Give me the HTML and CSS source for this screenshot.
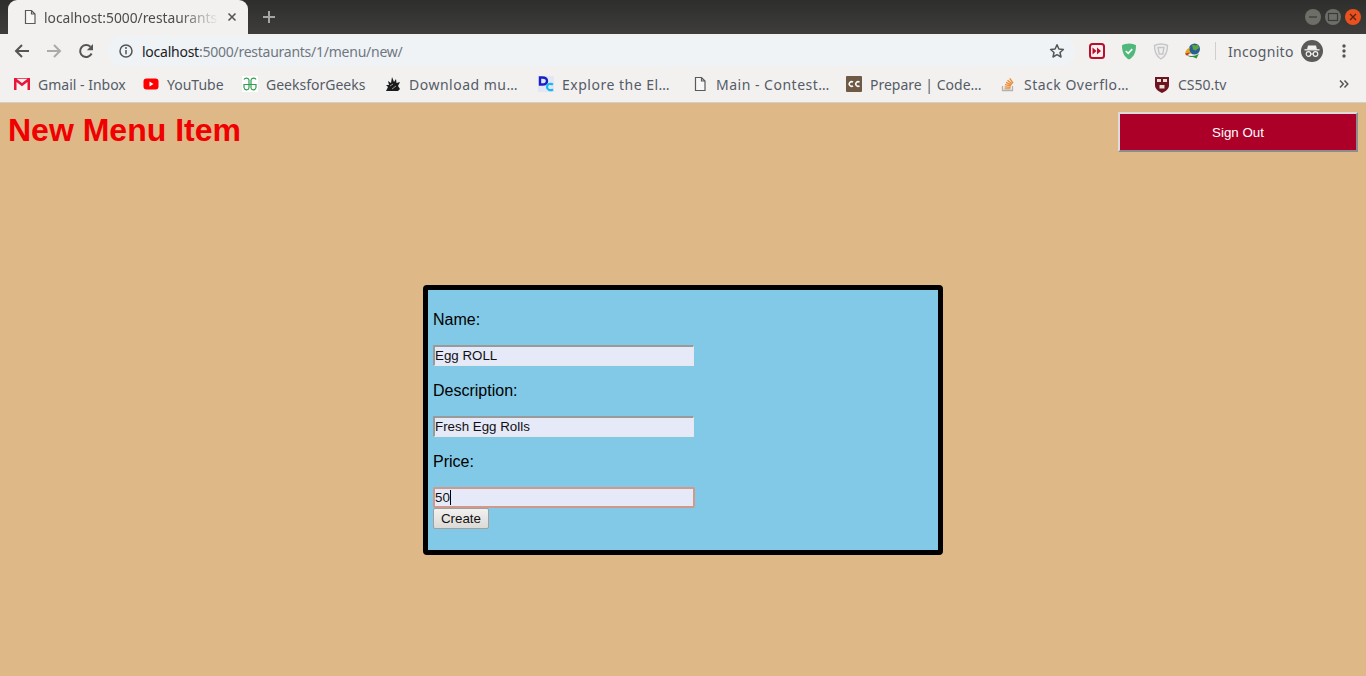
FILE: index.html
```html
<!DOCTYPE html>
<html>
<head>
<meta charset="utf-8">
<title>New Menu Item</title>
<link rel="stylesheet" href="styles.css">
</head>
<body>

<!-- tab strip -->
<div class="tabstrip">
	<div class="tab">
		<svg class="tab-icon" width="16" height="16" viewBox="0 0 16 16"><path d="M3.500 1.500h6l3.500 3.500v9.500h-9.500z M9.500 1.500v3.500h3.500" fill="#f7f7f7" stroke="#5a5a5a" stroke-width="1.200"/></svg>
		<span class="tab-title">localhost:5000/restaurants</span>
		<svg class="tab-close" width="10" height="10" viewBox="0 0 10 10"><path d="M1.500 1.500l7 7M8.500 1.500l-7 7" stroke="#555" stroke-width="1.600"/></svg>
	</div>
	<svg class="new-tab" width="14" height="14" viewBox="0 0 14 14"><path d="M7 1v12M1 7h12" stroke="#a5a5a3" stroke-width="2"/></svg>
	<div class="win-buttons">
		<span class="win-btn"><svg width="12" height="12" viewBox="0 0 12 12"><path d="M2 6h8" stroke="#3a3a38" stroke-width="1.300"/></svg></span>
		<span class="win-btn"><svg width="12" height="12" viewBox="0 0 12 12"><rect x="1.500" y="2.500" width="9" height="7" fill="none" stroke="#3a3a38" stroke-width="1.200"/></svg></span>
		<span class="win-btn win-close"><svg width="12" height="12" viewBox="0 0 12 12"><path d="M3 3l6 6M9 3l-6 6" stroke="#5c2410" stroke-width="1.400"/></svg></span>
	</div>
</div>

<!-- toolbar -->
<div class="toolbar">
	<span class="tool-btn"><svg width="16" height="16" viewBox="0 0 16 16"><path d="M15 8H2M8 2L2 8l6 6" fill="none" stroke="#555" stroke-width="2"/></svg></span>
	<span class="tool-btn"><svg width="16" height="16" viewBox="0 0 16 16"><path d="M1 8h13M8 2l6 6-6 6" fill="none" stroke="#aaa" stroke-width="2"/></svg></span>
	<span class="tool-btn"><svg width="16" height="16" viewBox="0 0 16 16"><path d="M13.600 10.500A6 6 0 1 1 12.400 3.800" fill="none" stroke="#555" stroke-width="2"/><path d="M15 1v6.200H8.800z" fill="#555"/></svg></span>
	<div class="omnibox">
		<svg width="14" height="14" viewBox="0 0 14 14"><circle cx="7" cy="7" r="6" fill="none" stroke="#555" stroke-width="1.500"/><path d="M7 6v4.300" stroke="#555" stroke-width="1.500"/><circle cx="7" cy="4" r="1" fill="#555"/></svg>
		<span class="url"><span class="url-host">localhost</span>:5000/restaurants/1/menu/new/</span>
		<svg class="star" width="16" height="16" viewBox="0 0 16 16"><path d="M8 1.800l1.900 4.200 4.500.5-3.400 3 1 4.500L8 11.700 4 14l1-4.500-3.400-3 4.500-.5z" fill="none" stroke="#555" stroke-width="1.500" stroke-linejoin="round"/></svg>
	</div>
	<span class="tool-btn"><svg width="16" height="16" viewBox="0 0 16 16"><rect x="1" y="1" width="14" height="14" rx="2.500" fill="#fbeef0" stroke="#b8102c" stroke-width="2"/><path d="M3.500 4.500l4 3.500-4 3.500zM8 4.500l4 3.500-4 3.500z" fill="#b8102c"/></svg></span>
	<span class="tool-btn"><svg width="16" height="17" viewBox="0 0 16 17"><path d="M8 .5c2.500 0 5 .8 7 1.800C15 9 13 14 8 16.500 3 14 1 9 1 2.300 3 1.300 5.500.5 8 .5z" fill="#4fb87a"/><path d="M4.800 8l2.400 2.400 4-4.300" fill="none" stroke="#fff" stroke-width="1.600"/></svg></span>
	<span class="tool-btn"><svg width="16" height="17" viewBox="0 0 16 17"><path d="M8 1c2.400 0 4.700.6 6.500 1.500C14.500 9 12.500 13.500 8 16 3.500 13.500 1.500 9 1.500 2.500 3.300 1.600 5.600 1 8 1z" fill="#eee" stroke="#c6c6c6" stroke-width="1.400"/><path d="M5 4.500h6L9.800 11H6.200z" fill="none" stroke="#c6c6c6" stroke-width="1.400"/></svg></span>
	<span class="tool-btn"><svg width="18" height="16" viewBox="0 0 18 16"><circle cx="10.500" cy="6" r="5.500" fill="#2a5f95"/><path d="M8 1.500l3.500 1 2.500-1 1 3.500-3.500 2.500-2.500-1z" fill="#5ea53a"/><path d="M1 10.500c1-4 3-5.500 5.500-6C4.500 6.500 5 9 8 10.500z" fill="#e0a818"/><path d="M1 10.500c.3 1 1 1.800 2 2.300L6.500 9.500z" fill="#d0302a"/><path d="M3 12c3 1.500 8 1.500 12-1.500l-2.500 5-3.500-1.500c-2.500.3-4.500-.3-6-2z" fill="#2f9230"/></svg></span>
	<span class="tool-sep"></span>
	<span class="incognito-label">Incognito</span>
	<svg class="incognito-icon" width="22" height="22" viewBox="0 0 22 22"><circle cx="11" cy="11" r="11" fill="#5a5a5a"/><path d="M7 5.500h8l1 4H6z" fill="#f2f1f0"/><path d="M3.500 9.800h15" stroke="#f2f1f0" stroke-width="1.300"/><circle cx="7.500" cy="14" r="2.300" fill="none" stroke="#f2f1f0" stroke-width="1.200"/><circle cx="14.500" cy="14" r="2.300" fill="none" stroke="#f2f1f0" stroke-width="1.200"/><path d="M9.800 14h2.400" stroke="#f2f1f0" stroke-width="1.200"/></svg>
	<svg class="menu-dots" width="4" height="14" viewBox="0 0 4 14"><circle cx="2" cy="2" r="1.700" fill="#555"/><circle cx="2" cy="7" r="1.700" fill="#555"/><circle cx="2" cy="12" r="1.700" fill="#555"/></svg>
</div>

<!-- bookmarks -->
<div class="bookmarks">
	<a class="bm bm-gmail"><svg width="16" height="12" viewBox="0 0 16 12"><rect width="16" height="12" fill="#e8173a"/><path d="M2.500 0.800h11L8 5zM2.500 4L8 8.300 13.500 4v8h-11z" fill="#f7f3f3"/></svg>Gmail - Inbox</a>
	<a class="bm bm-youtube"><svg width="16" height="12" viewBox="0 0 16 12"><rect width="15" height="11" x=".5" y=".5" rx="3" fill="#f00"/><path d="M6.500 3.500l4 2.500-4 2.500z" fill="#fff"/></svg>YouTube</a>
	<a class="bm bm-geeks"><svg width="16" height="16" viewBox="0 0 16 16"><rect width="16" height="16" fill="#fff"/><path d="M2 3.500C3 1.500 6.500 1.500 7 4v8c-.5 2.500-4.500 2.500-5-.5V8.500h12v3c-.5 3-4.500 3-5 .5V4c.5-2.500 4-2.500 5-.5" fill="none" stroke="#2f9e4f" stroke-width="1.200"/></svg>GeeksforGeeks</a>
	<a class="bm bm-download bm-cut"><svg width="16" height="16" viewBox="0 0 16 16"><path d="M1 15l2-4-2-2h3L3 5l3 2 1-6 2 5 2-3 .5 4L15 6l-2 4 2 3-2 2z" fill="#1c1c1c"/><path d="M5 10l3-2M7 13l4-3" stroke="#ccc" stroke-width=".7"/></svg>Download mu…</a>
	<a class="bm bm-explore bm-cut"><svg width="16" height="16" viewBox="0 0 16 16"><rect width="16" height="16" fill="#e2e6f5"/><path d="M2 1.500h2.500C7.500 1.500 9 3 9 5S7.500 8.500 4.500 8.500H2z" fill="none" stroke="#1a20c8" stroke-width="2.400"/><path d="M15 8.500c-2.500-1.500-6-.5-6 2.500s3.500 4 6 2.500" fill="none" stroke="#18b8f0" stroke-width="2.200"/></svg>Explore the El…</a>
	<a class="bm bm-main bm-cut"><svg width="16" height="16" viewBox="0 0 16 16"><path d="M3.500 1.500h6l3.500 3.500v9.500h-9.500z M9.500 1.500v3.500h3.500" fill="#f7f7f7" stroke="#5a5a5a" stroke-width="1.200"/></svg>Main - Contest…</a>
	<a class="bm bm-prepare"><svg width="16" height="16" viewBox="0 0 16 16"><rect width="16" height="16" rx="1" fill="#6f5a45"/><path d="M7 6.200a2.300 2.300 0 1 0 0 3.600M13.500 6.200a2.300 2.300 0 1 0 0 3.600" fill="none" stroke="#fff" stroke-width="1.500"/></svg>Prepare | Code…</a>
	<a class="bm bm-stack bm-cut"><svg width="16" height="16" viewBox="0 0 16 16"><path d="M2.500 10v4.500h10V10" fill="none" stroke="#b5b2ae" stroke-width="1.300"/><path d="M4.500 12.800h6" stroke="#c9a27c" stroke-width="1.300"/><path d="M4.600 10.800l6 .6M5 8.600l5.900 1.300M6 6.300l5.400 2.600M7.500 4.200l4.800 3.700M9.700 2.300l3.400 4.800" stroke="#ee8a30" stroke-width="1.300"/></svg>Stack Overflo…</a>
	<a class="bm bm-cs50"><svg width="16" height="17" viewBox="0 0 16 17"><path d="M1 1h14v8c0 4-3 6-7 8-4-2-7-4-7-8z" fill="#6e1420"/><rect x="3" y="3" width="4" height="3" fill="#e4e0d8"/><rect x="9" y="3" width="4" height="3" fill="#e4e0d8"/><rect x="5.500" y="9" width="5" height="3.500" fill="#e4e0d8"/></svg>CS50.tv</a>
	<svg class="bm-more" width="10" height="10" viewBox="0 0 10 10"><path d="M1 1.500L4.300 5 1 8.500M5.500 1.500L8.800 5 5.500 8.500" fill="none" stroke="#555" stroke-width="1.500"/></svg>
</div>

<!-- page content -->
<div class="page">
	<div class="page-head">
		<h1>New Menu Item</h1>
		<button class="signout" type="button">Sign Out</button>
	</div>
	<form class="menu-form">
		<p>Name:</p>
		<input class="field" type="text" value="Egg ROLL">
		<p>Description:</p>
		<input class="field" type="text" value="Fresh Egg Rolls">
		<p>Price:</p>
		<div class="field-wrap">
			<input class="field field-focus" type="text" value="50">
			<span class="caret"></span>
		</div>
		<button class="create" type="button">Create</button>
	</form>
</div>

</body>
</html>
```

FILE: styles.css
```css
html, body {margin: 0; padding: 0; height: 100%}
body {display: flex; flex-direction: column; overflow: hidden; background-color: #deb887; font-family: "Liberation Sans", Arial, sans-serif}

.tabstrip {display: flex; align-items: center; height: 34px; flex: none; background: linear-gradient(#2e2e2d, #3e3d3b); padding-left: 8px}
.tab {display: flex; align-items: center; align-self: stretch; box-sizing: border-box; width: 240px; padding: 0 11px 0 14px; background-color: #f2f1f0; border-radius: 9px 9px 0 0; font-family: "Noto Sans", sans-serif; font-size: 14px; color: #4c4c4c}
.tab-icon {flex: none; margin-right: 6px}
.tab-title {flex: 1; overflow: hidden; white-space: nowrap; font-size: 13.800px; -webkit-mask-image: linear-gradient(to right, #000 135px, transparent 175px); mask-image: linear-gradient(to right, #000 135px, transparent 175px)}
.tab-close {flex: none; margin-left: 4px}
.new-tab {margin-left: 14px}
.win-buttons {display: flex; gap: 4px; margin-left: auto; margin-right: 5px}
.win-btn {display: flex; align-items: center; justify-content: center; width: 16px; height: 16px; border-radius: 50%; background-color: #6e6e69}
.win-close {background-color: #e9521f}

.toolbar {display: flex; align-items: center; height: 34px; flex: none; background-color: #f2f1f0; padding-left: 6px; font-family: "Noto Sans", sans-serif; font-size: 14px; color: #555}
.tool-btn {display: flex; align-items: center; justify-content: center; width: 32px; height: 28px; flex: none}
.omnibox {display: flex; align-items: center; box-sizing: border-box; width: 967px; height: 30px; margin: 0 6px 0 6px; padding: 0 10px 0 11px; background-color: #eff3f6; border-radius: 15px; color: #6f7780}
.url {margin-left: 9px; white-space: nowrap; letter-spacing: -0.25px}
.url-host {color: #202124}
.star {margin-left: auto}
.tool-sep {width: 1px; height: 18px; margin-left: 6px; background-color: #cfcfcf}
.incognito-label {margin-left: 12px; color: #555c66; letter-spacing: 0.3px}
.incognito-icon {margin-left: 7px}
.menu-dots {margin-left: 19px}

.bookmarks {display: flex; align-items: center; box-sizing: border-box; height: 35px; flex: none; padding: 0 0 2px 14px; background-color: #f2f1f0; border-bottom: 1px solid #d3cfc9; font-family: "Noto Sans", sans-serif; font-size: 14px; color: #555c66}
.bm {display: flex; align-items: center; gap: 8px; width: 154px; flex: none; white-space: nowrap}
.bm-gmail {width: 129px}
.bm-youtube {width: 99px}
.bm-geeks {width: 143px}
.bm-download {width: 153px}
.bm-cut {letter-spacing: 0.5px}
.bm-more {margin-left: 31px}

.page {flex: 1; padding: 9px 8px 0 8px}
.page-head {display: flex; justify-content: space-between; align-items: flex-start}
h1 {margin: 0; font-size: 32px; line-height: 37px; font-weight: bold; color: #f00000}
.signout {box-sizing: border-box; width: 240px; height: 40px; background-color: #ad0029; border: 2px solid; border-color: #dcdcdc #8c8c8c #8c8c8c #dcdcdc; color: #fff; font-family: "Liberation Sans", sans-serif; font-size: 13.333px}

.menu-form {box-sizing: border-box; width: 520px; height: 270px; margin: 133px auto 0 auto; padding: 5px 5px 0 5px; background-color: #81c9e6; border: 5px solid #000; border-radius: 4px}
.menu-form p {margin: 16px 0; font-size: 16px; line-height: 18px; color: #000}
.field {display: block; box-sizing: border-box; width: 261px; height: 21px; padding: 0 0 2px 0; background-color: #e6e9f8; border: 2px solid; border-color: #9a9a9a #e8e8e8 #e8e8e8 #9a9a9a; border-width: 2px 1px 1px 2px; border-radius: 0; font-family: "Liberation Sans", sans-serif; font-size: 13.333px; color: #111; outline: none}
.field-wrap {position: relative}
.field-focus {width: 262px; padding: 0 0 1px 0; border: 2px solid #d1998a; border-radius: 2px}
.caret {position: absolute; left: 17px; top: 3px; width: 1px; height: 15px; background-color: #000}
.create {display: block; box-sizing: border-box; width: 56px; height: 21px; padding: 0; background: linear-gradient(#f2f1f0, #dcdad6); border: 1px solid #a0a0a0; border-radius: 2px; font-family: "Liberation Sans", sans-serif; font-size: 13.333px; color: #111}
```
